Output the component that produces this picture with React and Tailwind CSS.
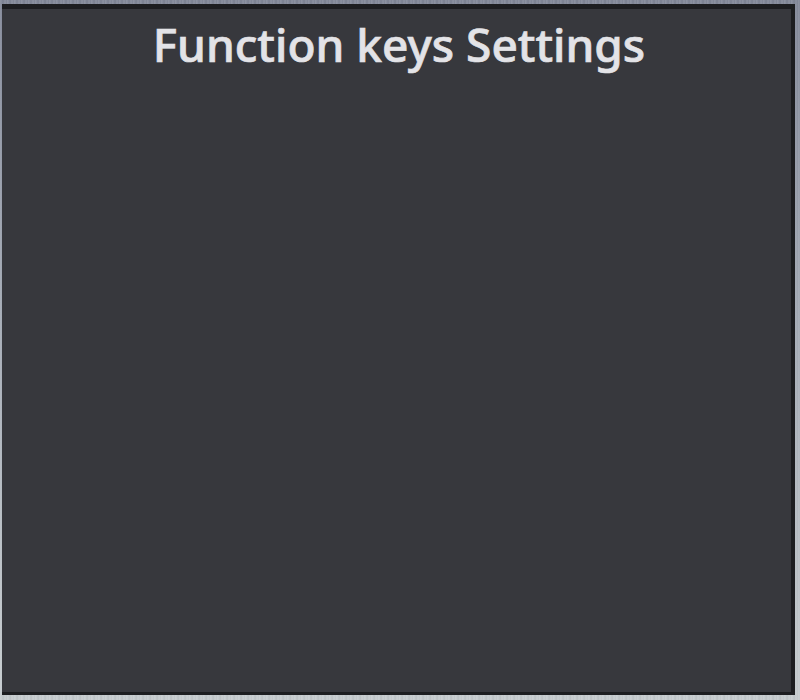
import React from 'react';

export default function App() {
    return (
        <div className="w-[800px] h-[700px] overflow-hidden bg-[linear-gradient(180deg,#7f8596_0%,#a0a7b2_45%,#c4cacd_100%)] relative">
            {/* brushed metal streaks */}
            <div className="absolute inset-0 bg-[repeating-linear-gradient(90deg,rgba(255,255,255,0.12)_0px,rgba(255,255,255,0.03)_2px,rgba(0,0,0,0.05)_3px,rgba(255,255,255,0.10)_5px,rgba(0,0,0,0.02)_7px)]" />
            <div className="relative ml-[2px] mt-[4px] w-[793px] h-[691px] bg-[#1d1e21] pt-[5px] pr-[4px] pb-[3px] flex">
                <div className="flex-1 bg-[#37383d] flex flex-col items-center">
                    <h1 className="mt-[5px] pl-[5px] text-[46px] leading-[60px] font-medium text-[#e3e3e7] font-['Noto_Sans',sans-serif] tracking-[0px] [-webkit-text-stroke:0.7px_#e3e3e7]">
                        Function keys Settings
                    </h1>
                </div>
            </div>
        </div>
    );
}
